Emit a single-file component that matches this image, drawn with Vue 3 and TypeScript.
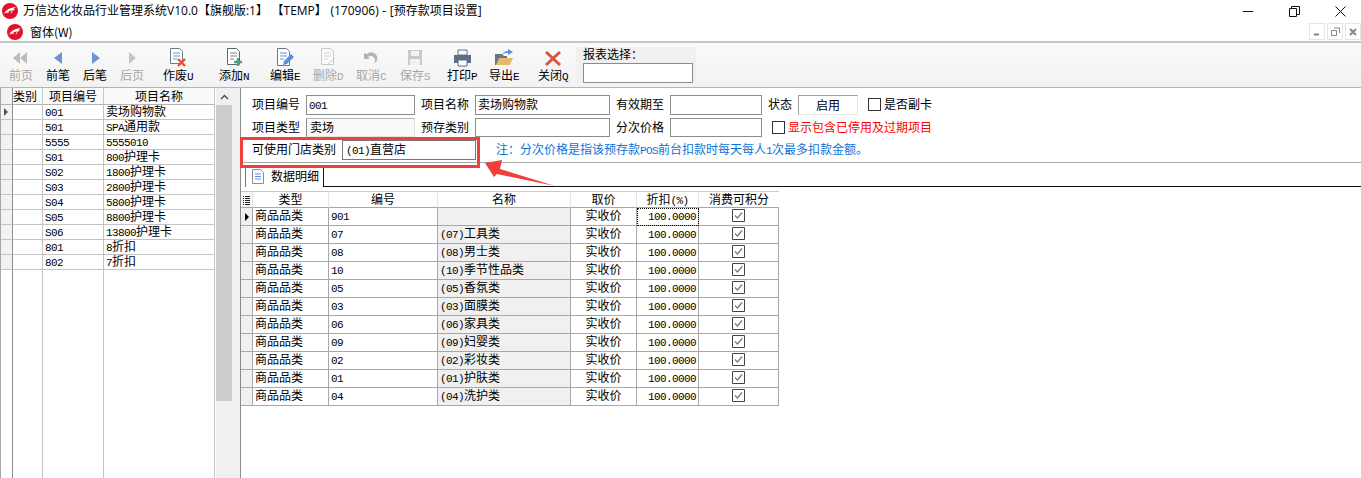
<script setup lang="ts">
import { h } from 'vue'

function runs(s: string) {
  return s.match(/[\x20-\x7e]+|[^\x20-\x7e]+/g) ?? []
}
const T = (props: { t: string }) =>
  runs(props.t).map((r) => (/^[\x20-\x7e]/.test(r) ? h('span', { class: 'lat' }, r) : r))
T.props = ['t']

interface Btn { c: number; label: string; icon: string; off?: boolean }
const btns: Btn[] = [
  { c: 21, label: '前页', icon: 'first', off: true },
  { c: 58, label: '前笔', icon: 'prev' },
  { c: 95, label: '后笔', icon: 'next' },
  { c: 132, label: '后页', icon: 'last', off: true },
  { c: 178, label: '作废U', icon: 'void' },
  { c: 234, label: '添加N', icon: 'add' },
  { c: 285, label: '编辑E', icon: 'edit' },
  { c: 328, label: '删除D', icon: 'del', off: true },
  { c: 371, label: '取消C', icon: 'undo', off: true },
  { c: 415, label: '保存S', icon: 'save', off: true },
  { c: 462, label: '打印P', icon: 'print' },
  { c: 504, label: '导出E', icon: 'export' },
  { c: 553, label: '关闭Q', icon: 'close' },
]
const W = 40
const margin = (i: number) => (i === 0 ? btns[0].c - W / 2 : btns[i].c - btns[i - 1].c - W)

const items = [
  ['001', '卖场购物款'], ['501', 'SPA通用款'], ['5555', '5555010'], ['S01', '800护理卡'],
  ['S02', '1800护理卡'], ['S03', '2800护理卡'], ['S04', '5800护理卡'], ['S05', '8800护理卡'],
  ['S06', '13800护理卡'], ['801', '8折扣'], ['802', '7折扣'],
]
const details = [
  ['901', ''], ['07', '(07)工具类'], ['08', '(08)男士类'], ['10', '(10)季节性品类'],
  ['05', '(05)香氛类'], ['03', '(03)面膜类'], ['06', '(06)家具类'], ['09', '(09)妇婴类'],
  ['02', '(02)彩妆类'], ['01', '(01)护肤类'], ['04', '(04)洗护类'],
]
</script>

<template>
  <div class="page">
    <header class="title">
      <svg class="logo" viewBox="0 0 16 16"><circle cx="8" cy="8" r="8" fill="#e1122c" /><path d="M2 10.500C4 7 7 5 11 4.500l3-.5-2.500 2 1.500.5-3 1.500c.5 1 0 2-1.500 2.500l1.500-3-3 .5-1 2.500-1-1z" fill="#fff" /></svg>
      <span class="title-text">万信达化妆品行业管理系统V10.0【旗舰版:1】 【TEMP】 (170906) - [预存款项目设置]</span>
      <div class="win">
        <svg width="11" height="11" viewBox="0 0 11 11"><path d="M0 5.500h10" stroke="#111" fill="none" /></svg>
        <svg width="11" height="11" viewBox="0 0 11 11"><path d="M.5 2.500h7v8h-7zM2.500 2.500v-2h8v8h-3" stroke="#111" fill="none" /></svg>
        <svg width="11" height="11" viewBox="0 0 11 11"><path d="M.5.5l10 10M10.500.5l-10 10" stroke="#111" fill="none" /></svg>
      </div>
    </header>

    <div class="menu">
      <svg class="logo" viewBox="0 0 16 16"><circle cx="8" cy="8" r="8" fill="#e1122c" /><path d="M2 10.500C4 7 7 5 11 4.500l3-.5-2.500 2 1.500.5-3 1.500c.5 1 0 2-1.500 2.500l1.500-3-3 .5-1 2.500-1-1z" fill="#fff" /></svg>
      <span class="menu-text">窗体(W)</span>
      <div class="mdi">
        <span class="mdi-btn"><svg width="8" height="8" viewBox="0 0 8 8"><path d="M1 6.500h5" stroke="#7d8a96" stroke-width="2" /></svg></span>
        <span class="mdi-btn"><svg width="9" height="9" viewBox="0 0 9 9"><path d="M.5 3.500h5v5h-5zM3 1h5.500v5" stroke="#7d8a96" fill="none" /></svg></span>
        <span class="mdi-btn"><svg width="8" height="8" viewBox="0 0 8 8"><path d="M1 1l6 6M7 1l-6 6" stroke="#7d8a96" stroke-width="2" /></svg></span>
      </div>
    </div>

    <nav class="toolbar">
      <button v-for="(b, i) in btns" :key="b.label" class="tool" :class="{ off: b.off }" :style="{ marginLeft: margin(i) + 'px' }">
        <svg width="22" height="20" viewBox="0 0 22 20">
          <template v-if="b.icon === 'first'"><path d="M10 4v12L3 10zM17 4v12l-7-6z" fill="#bdbdbd" /></template>
          <path v-else-if="b.icon === 'prev'" d="M15 4v12L7 10z" fill="#6f93d6" />
          <path v-else-if="b.icon === 'next'" d="M8 4v12l8-6z" fill="#6f93d6" />
          <path v-else-if="b.icon === 'last'" d="M8 4v12l7-6z" fill="#c4c4c4" />
          <template v-else-if="b.icon === 'void'">
            <path d="M3.500.5h9l3 3v12h-12z" fill="#fff" stroke="#6c7a8c" />
            <path d="M6 5h7M6 8h7M6 11h4" stroke="#6f93d6" />
            <path d="M11 11l7 7M18 11l-7 7" stroke="#d9553a" stroke-width="2.400" />
          </template>
          <template v-else-if="b.icon === 'add'">
            <path d="M4.500.5h9l3 3v13h-12z" fill="#fff" stroke="#5c6b62" />
            <path d="M7 5h7M7 8h7M7 11h4" stroke="#7a8a80" />
            <path d="M15 10v8M11 14h8" stroke="#4f9f83" stroke-width="2.400" />
          </template>
          <template v-else-if="b.icon === 'edit'">
            <path d="M3.500.5h9l3 3v14h-12z" fill="#fff" stroke="#6c7a8c" />
            <path d="M6 5h7M6 8h7M6 11h4" stroke="#6f93d6" />
            <path d="M9 17l1-4 7-7 3 3-7 7z" fill="#5f8fdc" />
          </template>
          <template v-else-if="b.icon === 'del'">
            <path d="M4.500.5h9l3 3v13h-12z" fill="#fafafa" stroke="#c9c9c9" />
            <path d="M7 5h7M7 8h7M7 11h4M11 16l7-6" stroke="#d2d2d2" />
          </template>
          <path v-else-if="b.icon === 'undo'" d="M4 5v6h6L8 9c3-2 6-1 7 3 0 1 0 2-1 3 3-1 4-4 3-7-2-4-7-5-10-2z" fill="#b5b5b5" />
          <template v-else-if="b.icon === 'save'">
            <path d="M4 2h14v15H4z" fill="#c9c9c9" />
            <path d="M7 3h8v5H7zM6 11h10v6H6z" fill="#f2f2f2" />
          </template>
          <template v-else-if="b.icon === 'print'">
            <path d="M7 2h9v5H7z" fill="#fff" stroke="#5d6f86" />
            <path d="M3 7h17v8H3z" fill="#5d6f86" />
            <path d="M7 12h9v6H7z" fill="#fff" stroke="#5d6f86" />
          </template>
          <template v-else-if="b.icon === 'export'">
            <path d="M2 6h7l2 2h3v9H2z" fill="#6b7480" />
            <path d="M3 17l3-7h14l-3 7z" fill="#e8b96c" />
            <path d="M9 7c1-3 4-4 6-4V1l5 3-5 3V5c-2 0-4 0-6 2z" fill="#5f8fdc" />
          </template>
          <path v-else-if="b.icon === 'close'" d="M4 4l14 13M18 4L4 17" stroke="#d9553a" stroke-width="3" />
        </svg>
        <span class="tool-label"><T :t="b.label" /></span>
      </button>
      <div class="report">
        <span>报表选择：</span>
        <span class="report-input"></span>
      </div>
    </nav>

    <main class="main">
      <section class="left">
        <table class="grid lgrid">
          <colgroup><col class="l0" /><col class="l1" /><col class="l2" /><col class="l3" /></colgroup>
          <thead>
            <tr><th class="ind"></th><th class="kind">类别</th><th>项目编号</th><th>项目名称</th></tr>
          </thead>
          <tbody>
            <tr v-for="(r, i) in items" :key="r[0]">
              <td class="ind"><i v-if="i === 0" class="mark"></i></td>
              <td></td>
              <td><T :t="r[0]" /></td>
              <td><T :t="r[1]" /></td>
            </tr>
            <tr class="rest"><td class="ind"></td><td></td><td></td><td></td></tr>
          </tbody>
        </table>
        <div class="scroll">
          <span class="up"><svg width="9" height="6" viewBox="0 0 9 6"><path d="M1 5l3.500-3.500L8 5" fill="none" stroke="#555" stroke-width="1.500" /></svg></span>
          <span class="thumb"></span>
        </div>
      </section>

      <div class="splitter"></div>

      <section class="right">
        <form class="form" @submit.prevent>
          <div class="row">
            <label class="lb">项目编号</label><span class="ip w109"><T t="001" /></span>
            <label class="lb">项目名称</label><span class="ip w135">卖场购物款</span>
            <label class="lb">有效期至</label><span class="ip w92"></span>
            <label class="lb short">状态</label><span class="state">启用</span>
            <span class="cb first"></span><span class="cb-text">是否副卡</span>
          </div>
          <div class="row low">
            <label class="lb">项目类型</label><span class="ip w109 ro">卖场</span>
            <label class="lb">预存类别</label><span class="ip w135"></span>
            <label class="lb">分次价格</label><span class="ip w92"></span>
            <span class="cb second"></span><span class="cb-text red">显示包含已停用及过期项目</span>
          </div>
          <div class="row">
            <label class="lb wide">可使用门店类别</label><span class="ip w134 sunk"><T t="(01)直营店" /></span>
            <span class="note"><T t="注：分次价格是指该预存款POS前台扣款时每天每人1次最多扣款金额。" /></span>
          </div>
        </form>

        <div class="tabs">
          <div class="tab">
            <svg width="14" height="15" viewBox="0 0 14 15"><path d="M1.500.5h8l3 3v11h-11z" fill="#fff" stroke="#7f8ea3" /><path d="M4 5h6M4 7.500h6M4 10h6" stroke="#5f8fdc" /></svg>
            <span>数据明细</span>
          </div>
          <div class="tab-line"></div>
        </div>

        <table class="grid rgrid">
          <colgroup><col class="r0" /><col class="r1" /><col class="r2" /><col class="r3" /><col class="r4" /><col class="r5" /><col class="r6" /></colgroup>
          <thead>
            <tr>
              <th class="ind"><svg width="7" height="9" viewBox="0 0 7 9"><path d="M0 .5h1M2 .5h5M0 2.500h1M2 2.500h5M0 4.500h1M2 4.500h5M0 6.500h1M2 6.500h5M0 8.500h1M2 8.500h5" stroke="#222" /></svg></th>
              <th>类型</th><th>编号</th><th>名称</th><th>取价</th><th><T t="折扣(%)" /></th><th>消费可积分</th>
            </tr>
          </thead>
          <tbody>
            <tr v-for="(r, i) in details" :key="r[0]">
              <td class="ind"><i v-if="i === 0" class="mark dark"></i></td>
              <td>商品品类</td>
              <td><T :t="r[0]" /></td>
              <td class="shade"><T :t="r[1]" /></td>
              <td class="mid">实收价</td>
              <td class="num" :class="{ focus: i === 0 }"><T t="100.0000" /></td>
              <td class="mid">
                <svg class="check" width="13" height="13" viewBox="0 0 13 13"><path d="M.5.5h12v12H.5z" fill="#fff" stroke="#444" /><path d="M3 6.500l2.500 2.500L10 3.500" fill="none" stroke="#777" stroke-width="1.200" /></svg>
              </td>
            </tr>
          </tbody>
        </table>
      </section>
    </main>

    <div class="callout"></div>
    <svg class="arrow" width="80" height="30" viewBox="0 0 80 30">
      <path d="M5 3L22 0l-2 9 55 17-58-12-3 3z" fill="#f0403c" />
    </svg>
  </div>
</template>

<style scoped>
.page {
  position: relative;
  width: 1361px;
  height: 478px;
  overflow: hidden;
  background: #fff;
  color: #000;
  font: 12px/16px "Noto Sans CJK SC", "Liberation Sans", sans-serif;
}
.title {
  display: flex;
  align-items: center;
  height: 22px;
  padding-left: 2px;
}
.logo { width: 16px; height: 16px; flex: none; }
.title-text { margin-left: 5px; white-space: pre; word-spacing: 0.5px; font-family: "Open Sans", "Noto Sans CJK SC", sans-serif; }
.win { margin-left: auto; display: flex; gap: 35px; padding-right: 15px; }
.menu {
  display: flex;
  align-items: center;
  height: 19px;
  padding-left: 7px;
}
.menu-text { margin-left: 7px; }
.mdi { margin-left: auto; display: flex; gap: 2px; }
.mdi-btn {
  display: flex;
  align-items: center;
  justify-content: center;
  width: 16px;
  height: 17px;
  border: 1px solid #e4e4e4;
  box-sizing: border-box;
}
.toolbar {
  display: flex;
  box-sizing: border-box;
  height: 47px;
  border-top: 2px solid #c4c4c4;
  border-bottom: 1px solid #b4b4b4;
  background: linear-gradient(#fafafa, #f2f2f2);
}
.tool {
  flex: none;
  width: 40px;
  padding: 5px 0 0;
  border: 0;
  background: none;
  font: inherit;
  color: #000;
  display: flex;
  flex-direction: column;
  align-items: center;
}
.tool.off { color: #a6a6a6; }
.tool-label { white-space: nowrap; line-height: 16px; margin-top: -1px; }
.report {
  margin: 4px 0 0 3px;
  width: 120px;
  height: 36px;
  background: #f0f0f0;
  padding-left: 7px;
  box-sizing: border-box;
  line-height: 13px;
}
.report span { display: block; }
.report-input {
  width: 110px;
  height: 20px;
  box-sizing: border-box;
  margin-top: 3px;
  background: #fff;
  border: 1px solid #8c8c8c;
}
.main { display: flex; height: 390px; }
.left { display: flex; flex: none; width: 232px; }
.grid { table-layout: fixed; border-collapse: separate; border-spacing: 0; }
.grid th {
  font-weight: 400;
  text-align: center;
  padding: 0;
  white-space: nowrap;
  box-sizing: border-box;
}
.grid td {
  padding: 0 0 0 2px;
  white-space: nowrap;
  box-sizing: border-box;
}
.lgrid { width: 215px; height: 390px; border-left: 1px solid #a8a8a8; box-sizing: border-box; }
.l0 { width: 12px; }
.l1 { width: 30px; }
.l2 { width: 61px; }
.l3 { width: 111px; }
.lgrid th { height: 17px; line-height: 14px; border-right: 1px solid #c8c8c8; border-bottom: 1px solid #b4b4b4; background: #fafafa; }
.lgrid th.kind { text-align: left; }
.lgrid td { height: 15px; line-height: 12px; padding-bottom: 2px; border-right: 1px solid #c4c4c4; border-bottom: 1px solid #c4c4c4; }
.lgrid .ind { background: #f2f2f2; border-right-color: #8c8c8c; padding: 0; }
.lgrid .rest td { height: auto; border-bottom: 0; background: #fff; }
.mark {
  display: block;
  width: 0;
  height: 0;
  margin-left: 3px;
  border-left: 4px solid #555;
  border-top: 4px solid transparent;
  border-bottom: 4px solid transparent;
}
.mark.dark { border-left-color: #000; }
.scroll {
  flex: none;
  width: 16px;
  margin-left: 1px;
  background: #f0f0f0;
  display: flex;
  flex-direction: column;
}
.up { height: 17px; display: flex; align-items: center; justify-content: center; }
.thumb { height: 296px; background: #cdcdcd; }
.splitter { flex: none; width: 8px; background: #f0f0f0; }
.right { flex: 1; border-left: 1px solid #8c8c8c; min-width: 0; }
.form {
  padding: 7px 0 2px 11px;
  border-bottom: 1px solid #a8a8a8;
  display: flex;
  flex-direction: column;
  gap: 3px;
  height: 75px;
  box-sizing: border-box;
}
.row { display: flex; align-items: center; height: 20px; white-space: nowrap; }
.row.low { height: 19px; }
.row.low .ip { height: 19px; }
.lb { width: 54px; flex: none; margin-bottom: 2px; }
.lb.short { width: 30px; }
.lb.wide { width: 90px; }
.ip {
  flex: none;
  height: 20px;
  box-sizing: border-box;
  border: 1px solid #8c8c8c;
  margin-right: 6px;
  padding-left: 2px;
  line-height: 16px;
}
.w109 { width: 109px; }
.w135 { width: 135px; }
.w134 { width: 134px; }
.w92 { width: 92px; }
.ro { background: #fafafa; border-color: #b4b4b4 #e4e4e4 #e4e4e4 #8c8c8c; padding-left: 3px; }
.sunk { border-color: #777; padding-left: 3px; }
.state {
  width: 60px;
  height: 20px;
  box-sizing: border-box;
  text-align: center;
  line-height: 17px;
  border: 1px solid;
  border-color: #a0a0a0 #e8e8e8 #e8e8e8 #a0a0a0;
}
.cb {
  flex: none;
  width: 13px;
  height: 13px;
  box-sizing: border-box;
  border: 1px solid #333;
  margin-bottom: 1px;
}
.cb.first { margin-left: 10px; }
.cb.second { margin-left: 4px; }
.cb-text { margin-left: 3px; margin-bottom: 2px; }
.red { color: #f00; }
.note { margin-left: 14px; color: #0a74d8; margin-bottom: 2px; }
.tabs { display: flex; margin-top: 2px; height: 22px; }
.tab {
  display: flex;
  align-items: center;
  gap: 6px;
  box-sizing: border-box;
  margin-left: 4px;
  padding-left: 5px;
  width: 79px;
  border-left: 1px solid #777;
  border-right: 1px solid #111;
  background: #fff;
}
.tab-line { flex: 1; border-bottom: 1px solid #111; }
.rgrid { width: 538px; margin-top: 4px; }
.r0 { width: 12px; }
.r1 { width: 76px; }
.r2 { width: 109px; }
.r3 { width: 133px; }
.r4 { width: 66px; }
.r5 { width: 62px; }
.r6 { width: 80px; }
.rgrid th {
  height: 17px;
  line-height: 12px;
  padding-bottom: 2px;
  border-right: 1px solid #e4e4e4;
  border-bottom: 1px solid #a8a8a8;
  border-top: 1px solid #c8c8c8;
}
.rgrid th:last-child { border-right: 0; }
.rgrid td { height: 18px; line-height: 14px; padding-bottom: 3px; border-right: 1px solid #a8a8a8; border-bottom: 1px solid #a8a8a8; }
.rgrid .ind { background: #f0f0f0; padding: 0; text-align: center; }
.rgrid th.ind { background: #f7f7f7; }
.rgrid .mark { margin-left: 4px; }
.shade { background: #f0f0f0; }
.mid { text-align: center; }
.rgrid td.mid { padding-left: 0; }
.rgrid td.num { text-align: right; padding-right: 2px; }
.rgrid td.focus { outline: 1px dotted #000; outline-offset: -1px; }
.check { display: block; margin: 1px auto 0; }
.callout {
  position: absolute;
  left: 240px;
  top: 137px;
  width: 240px;
  height: 31px;
  box-sizing: border-box;
  border: 3px solid #f0403c;
}
.arrow { position: absolute; left: 480px; top: 160px; }
</style>

<style>
.lat {
  font-family: "Liberation Mono", monospace;
  font-size: 11px;
  letter-spacing: -0.6px;
  line-height: 0;
}
</style>
